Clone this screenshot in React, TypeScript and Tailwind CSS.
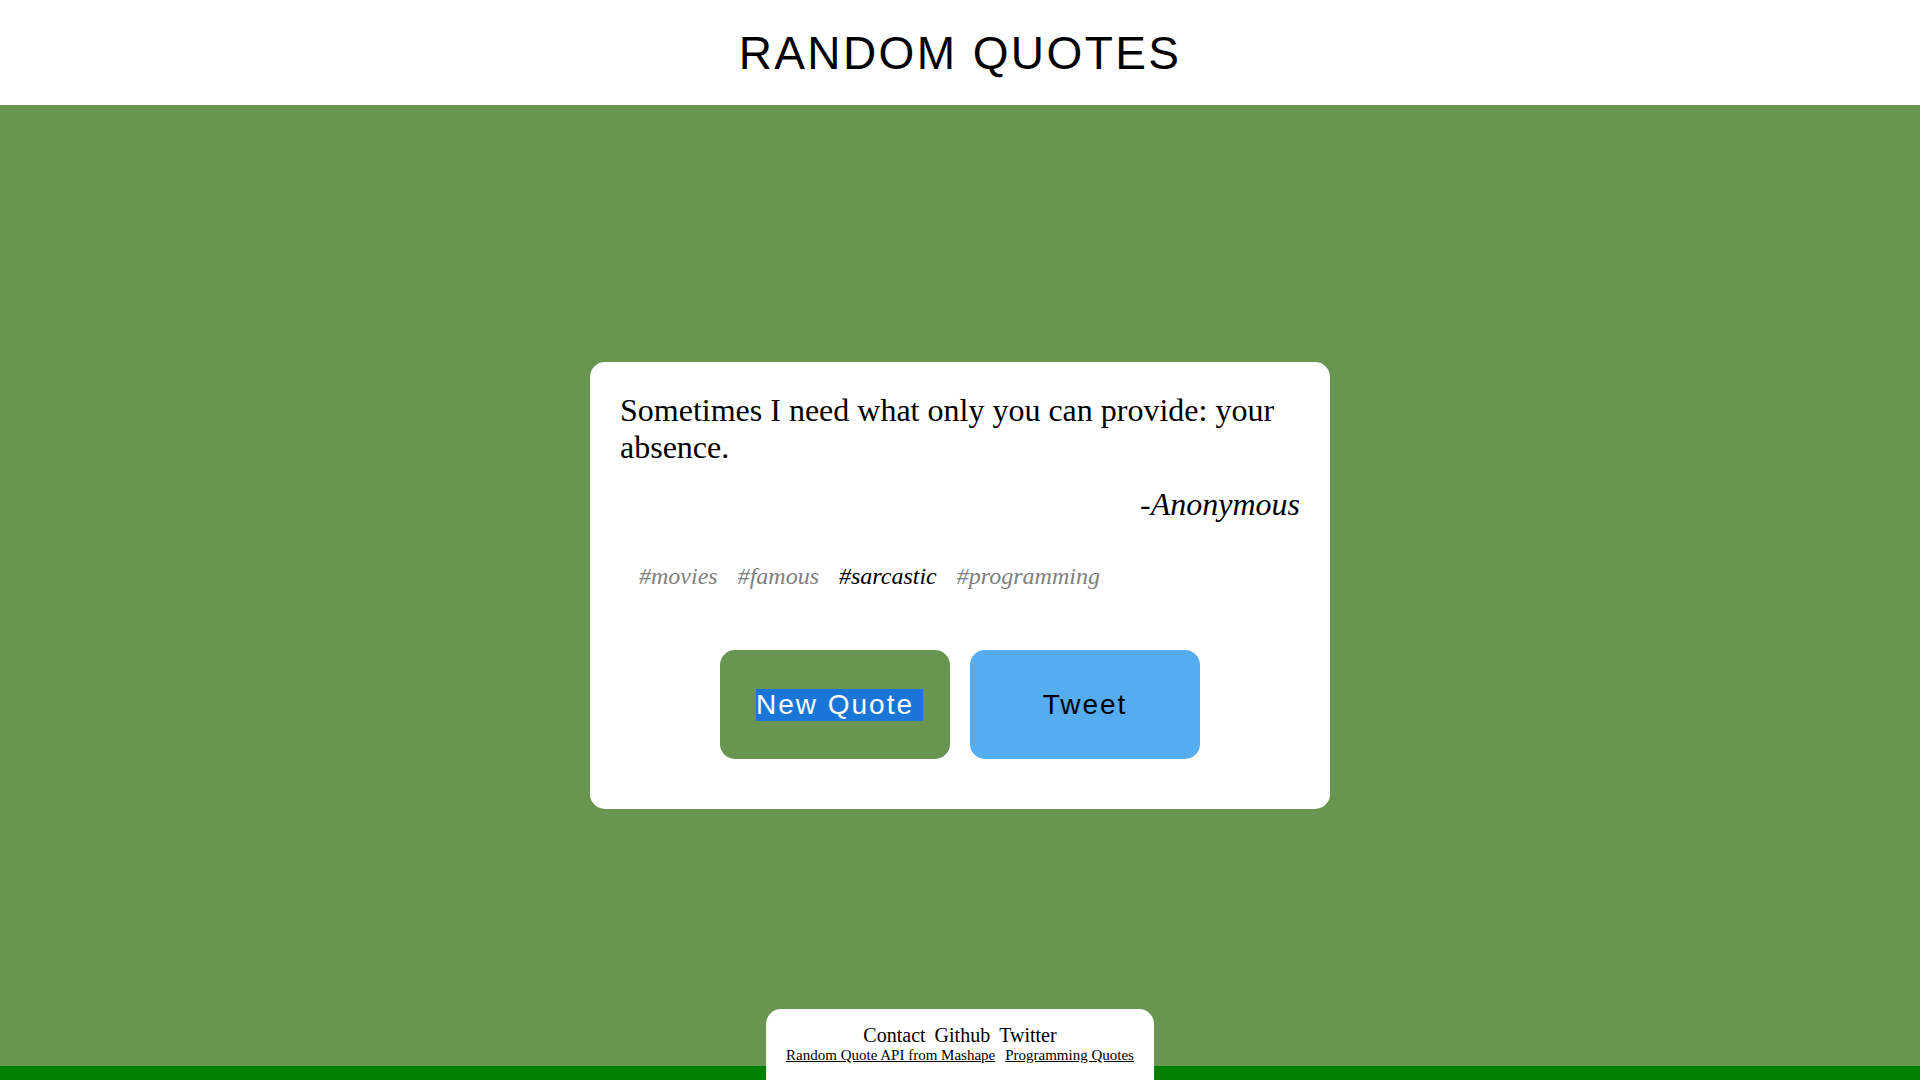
export default function App() {
  const tags = [
    { t: "#movies", active: false },
    { t: "#famous", active: false },
    { t: "#sarcastic", active: true },
    { t: "#programming", active: false },
  ];
  return (
    <div className="relative flex h-[1080px] w-full flex-col overflow-hidden">
      <header className="flex h-[105px] items-center justify-center bg-white">
        <h1 className="text-[46px] leading-none tracking-[2.4px] text-black [font-family:'Liberation_Sans',Arial,sans-serif]">
          RANDOM QUOTES
        </h1>
      </header>
      <main className="flex flex-1 items-center justify-center bg-[#689651]">
        <div className="w-[740px] rounded-[15px] bg-white px-[30px] pt-[30px] pb-[50px] [font-family:'Liberation_Serif','Times_New_Roman',serif]">
          <p className="text-[32px] leading-[36.5px] text-black">
            Sometimes I need what only you can provide: your absence.
          </p>
          <p className="mt-[21px] text-right text-[32px] italic leading-[36px] text-black">
            -Anonymous
          </p>
          <div className="mt-[40px] flex gap-[20px] pl-[19px] text-[24px] italic leading-[28px]">
            {tags.map((tag) => (
              <span key={tag.t} className={tag.active ? "text-black" : "text-[#808080]"}>
                {tag.t}
              </span>
            ))}
          </div>
          <div className="mt-[60px] flex justify-center gap-[20px] [font-family:'Liberation_Sans',Arial,sans-serif]">
            <button className="flex h-[109px] w-[230px] items-center justify-center rounded-[15px] bg-[#689651] text-[28px] leading-[1.15] tracking-[2px] text-white">
              <span className="ml-[9px] mt-[1px] bg-[#1a76d6] pr-[9px]">New Quote</span>
            </button>
            <button className="flex h-[109px] w-[230px] items-center justify-center rounded-[15px] bg-[#55acee] text-[28px] leading-[1.15] tracking-[2px] text-black">
              <span className="mt-[1px]">Tweet</span>
            </button>
          </div>
        </div>
      </main>
      <div className="h-[14px] bg-[#008000]" />
      <footer className="absolute bottom-0 left-1/2 h-[71px] -translate-x-1/2 rounded-t-[15px] bg-white px-[20px] pt-[14px] text-center text-black [font-family:'Liberation_Serif','Times_New_Roman',serif]">
        <div className="flex justify-center gap-[9px] text-[20px] leading-[24px]">
          <a>Contact</a>
          <a>Github</a>
          <a>Twitter</a>
        </div>
        <div className="flex justify-center gap-[10px] text-[15px] leading-[17px]">
          <a className="underline">Random Quote API from Mashape</a>
          <a className="underline">Programming Quotes</a>
        </div>
      </footer>
    </div>
  );
}
